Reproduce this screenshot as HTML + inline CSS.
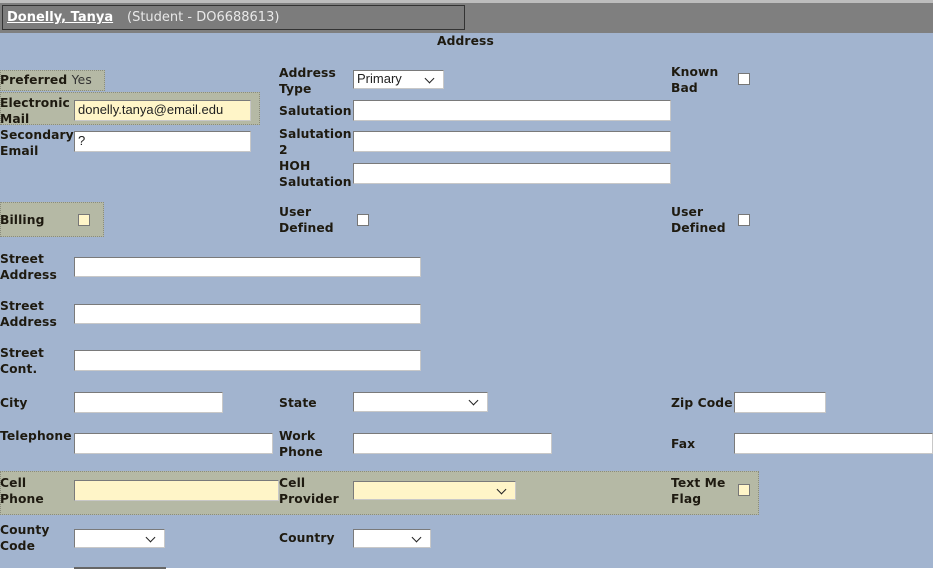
<!DOCTYPE html>
<html><head><meta charset="utf-8"><style>
*{margin:0;padding:0;box-sizing:border-box}
body{width:936px;height:571px;background:#fff;position:relative;overflow:hidden;font-family:"DejaVu Sans",Verdana,sans-serif}
#main{position:absolute;left:0;top:0;width:933px;height:568px;background:#a2b4cf}
.a{position:absolute}
.l{position:absolute;font-weight:bold;font-size:12.3px;line-height:15.5px;color:#1e1a10;letter-spacing:0.1px}
.i{position:absolute;background:#fff;border:1px solid #7a7a7a;border-right-color:#c8c8c8;border-bottom-color:#c8c8c8;font-family:"Liberation Sans",Arial,sans-serif;font-size:13px;line-height:17px;padding-left:3px;color:#222}
.y{background:#fff5c8}
.s::after{content:"";position:absolute;right:10px;top:4px;width:6px;height:6px;border-right:1.6px solid #222;border-bottom:1.6px solid #222;transform:rotate(45deg)}
.c{position:absolute;width:12px;height:12px;background:#fff;border:1px solid #777}
.h{position:absolute;background:#b5b9a5;border:1px dotted #8a8c7c}
</style></head><body>
<div id="main">
<div class="a" style="left:0;top:0;width:933px;height:33px;background:#7f7f7f;border-top:3px solid #bdbdbd"></div>
<div class="a" style="left:2px;top:5px;width:463px;height:25px;border:1px solid #333;background:#7c7c7c"></div>
<div class="a" style="left:7px;top:10px;font-weight:bold;font-size:13px;color:#fff;text-decoration:underline">Donelly, Tanya</div>
<div class="a" style="left:127px;top:10px;font-size:13px;color:#e8e8e8">(Student - DO6688613)</div>
<div class="l" style="left:437px;top:34px">Address</div>

<div class="h" style="left:0;top:70px;width:105px;height:21px"></div>
<div class="l" style="left:0;top:73px">Preferred <span style="font-weight:normal;color:#333">Yes</span></div>
<div class="h" style="left:0;top:92px;width:260px;height:33px"></div>
<div class="l" style="left:0;top:96px">Electronic<br>Mail</div>
<div class="i y" style="left:74px;top:100px;width:177px;height:21px">donelly.tanya@email.edu</div>
<div class="l" style="left:0;top:128px">Secondary<br>Email</div>
<div class="i" style="left:74px;top:131px;width:177px;height:21px">?</div>
<div class="h" style="left:0;top:202px;width:104px;height:35px"></div>
<div class="l" style="left:0;top:213px">Billing</div>
<div class="c" style="left:78px;top:214px;background:#fff5c8"></div>

<div class="l" style="left:279px;top:66px">Address<br>Type</div>
<div class="i s" style="left:353px;top:70px;width:91px;height:19px;line-height:16px">Primary</div>
<div class="l" style="left:279px;top:104px">Salutation</div>
<div class="i" style="left:353px;top:100px;width:318px;height:21px"></div>
<div class="l" style="left:279px;top:127px">Salutation<br>2</div>
<div class="i" style="left:353px;top:131px;width:318px;height:21px"></div>
<div class="l" style="left:279px;top:159px">HOH<br>Salutation</div>
<div class="i" style="left:353px;top:163px;width:318px;height:21px"></div>
<div class="l" style="left:279px;top:205px">User<br>Defined</div>
<div class="c" style="left:357px;top:214px"></div>

<div class="l" style="left:671px;top:65px">Known<br>Bad</div>
<div class="c" style="left:738px;top:73px"></div>
<div class="l" style="left:671px;top:205px">User<br>Defined</div>
<div class="c" style="left:738px;top:214px"></div>

<div class="l" style="left:0;top:252px">Street<br>Address</div>
<div class="i" style="left:74px;top:257px;width:347px;height:20px"></div>
<div class="l" style="left:0;top:299px">Street<br>Address</div>
<div class="i" style="left:74px;top:304px;width:347px;height:20px"></div>
<div class="l" style="left:0;top:346px">Street<br>Cont.</div>
<div class="i" style="left:74px;top:350px;width:347px;height:21px"></div>

<div class="l" style="left:0;top:396px">City</div>
<div class="i" style="left:74px;top:392px;width:149px;height:21px"></div>
<div class="l" style="left:279px;top:396px">State</div>
<div class="i s" style="left:353px;top:392px;width:135px;height:20px"></div>
<div class="l" style="left:671px;top:396px">Zip Code</div>
<div class="i" style="left:734px;top:392px;width:92px;height:21px"></div>

<div class="l" style="left:0;top:429px">Telephone</div>
<div class="i" style="left:74px;top:433px;width:199px;height:21px"></div>
<div class="l" style="left:279px;top:429px">Work<br>Phone</div>
<div class="i" style="left:353px;top:433px;width:199px;height:21px"></div>
<div class="l" style="left:671px;top:437px">Fax</div>
<div class="i" style="left:734px;top:433px;width:199px;height:21px"></div>

<div class="h" style="left:0;top:471px;width:759px;height:44px"></div>
<div class="l" style="left:0;top:476px">Cell<br>Phone</div>
<div class="i y" style="left:74px;top:480px;width:205px;height:21px"></div>
<div class="l" style="left:279px;top:476px">Cell<br>Provider</div>
<div class="i s y" style="left:353px;top:481px;width:163px;height:19px"></div>
<div class="l" style="left:671px;top:476px">Text Me<br>Flag</div>
<div class="c" style="left:738px;top:484px;background:#fff5c8"></div>

<div class="l" style="left:0;top:523px">County<br>Code</div>
<div class="i s" style="left:74px;top:529px;width:91px;height:19px"></div>
<div class="l" style="left:279px;top:531px">Country</div>
<div class="i s" style="left:353px;top:529px;width:78px;height:19px"></div>
<div class="a" style="left:74px;top:567px;width:92px;height:2px;background:#666"></div>
</div>
</body></html>
